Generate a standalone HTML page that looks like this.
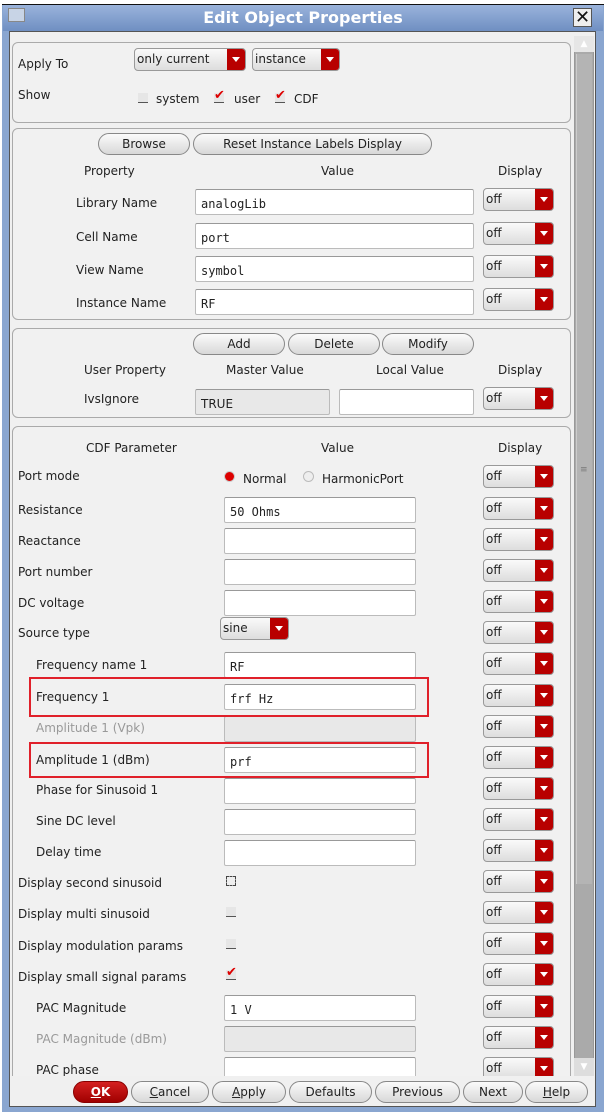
<!DOCTYPE html>
<html><head><meta charset="utf-8"><style>
*{box-sizing:border-box;margin:0;padding:0}
body{width:606px;height:1113px;background:#fff;position:relative;overflow:hidden;font-family:"DejaVu Sans","Liberation Sans",sans-serif;font-size:12px;color:#222}
.a{position:absolute}
.frame{left:2px;top:4px;width:602px;height:1108px;background:#8aa6d0;border-top:1px solid #111}
.title{left:3px;top:5px;width:600px;height:26px;background:linear-gradient(#9ab3db,#6f8fc2);color:#fff;font-weight:bold;font-size:16px;text-align:center;line-height:26px}
.content{left:9px;top:31px;width:587px;height:1076px;background:#f0f0f0;border:1px solid #555}
.panel{position:absolute;left:12px;width:559px;border:1px solid #aaa;border-radius:6px;background:#f1f1f1}
.lbl{position:absolute;white-space:nowrap;line-height:14px}
.dis{color:#999}
.inp{position:absolute;background:#fff;border:1px solid #bbb;border-top-color:#999;border-radius:2px;height:26px;font-family:"DejaVu Sans Mono","Liberation Mono",monospace;font-size:12px;padding:7px 0 0 5px}
.inp.g{background:#e8e8e8}
.dd{position:absolute;width:71px;height:23px;border:1px solid #999;border-radius:4px;background:linear-gradient(#fafafa,#ddd);font-size:12px;line-height:21px;padding-left:2px}
.dd::after{content:"";position:absolute;right:0;top:0;width:18px;height:21px;background:#b80000;border-radius:0 3px 3px 0}
.dd::before{content:"";position:absolute;right:5px;top:8px;border-left:4px solid transparent;border-right:4px solid transparent;border-top:5px solid #fff;z-index:2}
.btn{position:absolute;height:22px;border:1px solid #888;border-radius:11px;background:linear-gradient(#fbfbfb,#d8d8d8);text-align:center;line-height:20px;font-size:12px}
.cb{position:absolute;width:10px;height:10px;border-bottom:1px solid #555;background:#e6e6e6}
.chk{position:absolute;color:#d00;font-size:13px;font-weight:bold;line-height:10px}
.red{position:absolute;border:2px solid #e0202a}
</style></head><body>
<div class="a frame"></div>
<div class="a title">Edit Object Properties</div>
<div class="a" style="left:8px;top:8px;width:17px;height:14px;background:#c8d4e6;border:1px solid #888"></div>
<div class="a" style="left:573px;top:8px;width:19px;height:19px;background:#eee;border:1px solid #555;font-size:18px;line-height:17px;text-align:center;color:#111">✕</div>
<div class="a content"></div>
<!-- scrollbar -->
<div class="a" style="left:574px;top:36px;width:20px;height:1040px;background:#aaa;border:1px solid #999"></div>
<div class="a" style="left:574px;top:36px;width:20px;height:16px;background:#e6e6e6;color:#fff;font-size:9px;text-align:center;line-height:16px">▲</div>
<div class="a" style="left:574px;top:1058px;width:20px;height:18px;background:#ddd;color:#fff;font-size:9px;text-align:center;line-height:18px">▼</div>
<div class="a" style="left:576px;top:54px;width:16px;height:830px;background:#b4b4b4;border-left:1px solid #ccc"></div>
<div class="a" style="left:580px;top:465px;font-size:9px;color:#777">≡</div>

<!-- panel 1 -->
<div class="panel" style="top:42px;height:81px"></div>
<div class="lbl" style="left:18px;top:57px">Apply To</div>
<div class="lbl" style="left:18px;top:88px">Show</div>
<div class="dd" style="left:134px;top:48px;width:112px">only current</div>
<div class="dd" style="left:252px;top:48px;width:88px">instance</div>
<div class="cb" style="left:138px;top:93px"></div><div class="lbl" style="left:156px;top:92px">system</div>
<div class="cb" style="left:214px;top:93px"></div><div class="chk" style="left:214px;top:91px">✔</div><div class="lbl" style="left:234px;top:92px">user</div>
<div class="cb" style="left:275px;top:93px"></div><div class="chk" style="left:275px;top:91px">✔</div><div class="lbl" style="left:294px;top:92px">CDF</div>

<!-- panel 2 -->
<div class="panel" style="top:128px;height:192px"></div>
<div class="btn" style="left:98px;top:133px;width:92px">Browse</div>
<div class="btn" style="left:193px;top:133px;width:239px">Reset Instance Labels Display</div>
<div class="lbl" style="left:84px;top:164px">Property</div>
<div class="lbl" style="left:321px;top:164px">Value</div>
<div class="lbl" style="left:498px;top:164px">Display</div>
<div class="lbl" style="left:76px;top:196px">Library Name</div><div class="inp" style="left:195px;top:189px;width:279px">analogLib</div><div class="dd" style="left:483px;top:188px">off</div>
<div class="lbl" style="left:76px;top:230px">Cell Name</div><div class="inp" style="left:195px;top:223px;width:279px">port</div><div class="dd" style="left:483px;top:222px">off</div>
<div class="lbl" style="left:76px;top:263px">View Name</div><div class="inp" style="left:195px;top:256px;width:279px">symbol</div><div class="dd" style="left:483px;top:255px">off</div>
<div class="lbl" style="left:76px;top:296px">Instance Name</div><div class="inp" style="left:195px;top:289px;width:279px">RF</div><div class="dd" style="left:483px;top:288px">off</div>

<!-- panel 3 -->
<div class="panel" style="top:328px;height:90px"></div>
<div class="btn" style="left:193px;top:333px;width:92px">Add</div>
<div class="btn" style="left:288px;top:333px;width:92px">Delete</div>
<div class="btn" style="left:382px;top:333px;width:92px">Modify</div>
<div class="lbl" style="left:84px;top:363px">User Property</div>
<div class="lbl" style="left:226px;top:363px">Master Value</div>
<div class="lbl" style="left:376px;top:363px">Local Value</div>
<div class="lbl" style="left:498px;top:363px">Display</div>
<div class="lbl" style="left:84px;top:392px">IvsIgnore</div>
<div class="inp g" style="left:195px;top:389px;width:135px;font-family:'DejaVu Sans',sans-serif">TRUE</div>
<div class="inp" style="left:339px;top:389px;width:135px"></div>
<div class="dd" style="left:483px;top:387px">off</div>

<!-- panel 4 -->
<div class="a" style="left:12px;top:426px;width:560px;height:650px;overflow:hidden">
<div class="panel" style="left:0;top:0;height:700px"></div>
</div>
<div class="lbl" style="left:86px;top:441px">CDF Parameter</div>
<div class="lbl" style="left:321px;top:441px">Value</div>
<div class="lbl" style="left:498px;top:441px">Display</div>

<div class="lbl" style="left:18px;top:469px">Port mode</div>
<div class="a" style="left:225px;top:472px;width:9px;height:9px;border-radius:50%;background:#d00;box-shadow:0 0 0 1px #ccc"></div>
<div class="lbl" style="left:243px;top:472px">Normal</div>
<div class="a" style="left:304px;top:472px;width:9px;height:9px;border-radius:50%;background:#eee;box-shadow:0 0 0 1px #bbb"></div>
<div class="lbl" style="left:322px;top:472px">HarmonicPort</div>
<div class="dd" style="left:483px;top:465px">off</div>

<div class="lbl" style="left:18px;top:503px">Resistance</div><div class="inp" style="left:224px;top:497px;width:192px">50 Ohms</div><div class="dd" style="left:483px;top:497px">off</div>
<div class="lbl" style="left:18px;top:534px">Reactance</div><div class="inp" style="left:224px;top:528px;width:192px"></div><div class="dd" style="left:483px;top:528px">off</div>
<div class="lbl" style="left:18px;top:565px">Port number</div><div class="inp" style="left:224px;top:559px;width:192px"></div><div class="dd" style="left:483px;top:559px">off</div>
<div class="lbl" style="left:18px;top:596px">DC voltage</div><div class="inp" style="left:224px;top:590px;width:192px"></div><div class="dd" style="left:483px;top:590px">off</div>
<div class="lbl" style="left:18px;top:626px">Source type</div><div class="dd" style="left:220px;top:617px;width:69px">sine</div><div class="dd" style="left:483px;top:621px">off</div>
<div class="lbl" style="left:36px;top:658px">Frequency name 1</div><div class="inp" style="left:224px;top:652px;width:192px">RF</div><div class="dd" style="left:483px;top:652px">off</div>
<div class="lbl" style="left:36px;top:690px">Frequency 1</div><div class="inp" style="left:224px;top:684px;width:192px">frf Hz</div><div class="dd" style="left:483px;top:684px">off</div>
<div class="lbl dis" style="left:36px;top:721px">Amplitude 1 (Vpk)</div><div class="inp g" style="left:224px;top:716px;width:192px"></div><div class="dd" style="left:483px;top:715px">off</div>
<div class="lbl" style="left:36px;top:753px">Amplitude 1 (dBm)</div><div class="inp" style="left:224px;top:747px;width:192px">prf</div><div class="dd" style="left:483px;top:746px">off</div>
<div class="lbl" style="left:36px;top:783px">Phase for Sinusoid 1</div><div class="inp" style="left:224px;top:778px;width:192px"></div><div class="dd" style="left:483px;top:777px">off</div>
<div class="lbl" style="left:36px;top:814px">Sine DC level</div><div class="inp" style="left:224px;top:809px;width:192px"></div><div class="dd" style="left:483px;top:808px">off</div>
<div class="lbl" style="left:36px;top:845px">Delay time</div><div class="inp" style="left:224px;top:840px;width:192px"></div><div class="dd" style="left:483px;top:839px">off</div>
<div class="lbl" style="left:18px;top:876px">Display second sinusoid</div><div class="cb" style="left:226px;top:876px;border:1px dashed #444;background:#eee"></div><div class="dd" style="left:483px;top:870px">off</div>
<div class="lbl" style="left:18px;top:907px">Display multi sinusoid</div><div class="cb" style="left:226px;top:907px"></div><div class="dd" style="left:483px;top:901px">off</div>
<div class="lbl" style="left:18px;top:939px">Display modulation params</div><div class="cb" style="left:226px;top:939px"></div><div class="dd" style="left:483px;top:932px">off</div>
<div class="lbl" style="left:18px;top:970px">Display small signal params</div><div class="cb" style="left:226px;top:970px"></div><div class="chk" style="left:226px;top:968px">✔</div><div class="dd" style="left:483px;top:963px">off</div>
<div class="lbl" style="left:36px;top:1001px">PAC Magnitude</div><div class="inp" style="left:224px;top:995px;width:192px">1 V</div><div class="dd" style="left:483px;top:995px">off</div>
<div class="lbl dis" style="left:36px;top:1032px">PAC Magnitude (dBm)</div><div class="inp g" style="left:224px;top:1026px;width:192px"></div><div class="dd" style="left:483px;top:1026px">off</div>
<div class="a" style="left:12px;top:1057px;width:560px;height:19px;overflow:hidden">
<div class="lbl" style="left:24px;top:6px">PAC phase</div><div class="inp" style="left:212px;top:0;width:192px"></div><div class="dd" style="left:471px;top:0">off</div>
</div>

<div class="red" style="left:29px;top:677px;width:400px;height:40px"></div>
<div class="red" style="left:29px;top:742px;width:400px;height:36px"></div>

<!-- bottom buttons -->
<div class="btn" style="left:73px;top:1081px;width:55px;background:linear-gradient(#d42020,#a00000);color:#fff;font-weight:bold;border-color:#800"><u>O</u>K</div>
<div class="btn" style="left:131px;top:1081px;width:78px"><u>C</u>ancel</div>
<div class="btn" style="left:212px;top:1081px;width:74px"><u>A</u>pply</div>
<div class="btn" style="left:289px;top:1081px;width:83px">Defaults</div>
<div class="btn" style="left:375px;top:1081px;width:85px">Previous</div>
<div class="btn" style="left:463px;top:1081px;width:60px">Next</div>
<div class="btn" style="left:525px;top:1081px;width:63px"><u>H</u>elp</div>
</body></html>
